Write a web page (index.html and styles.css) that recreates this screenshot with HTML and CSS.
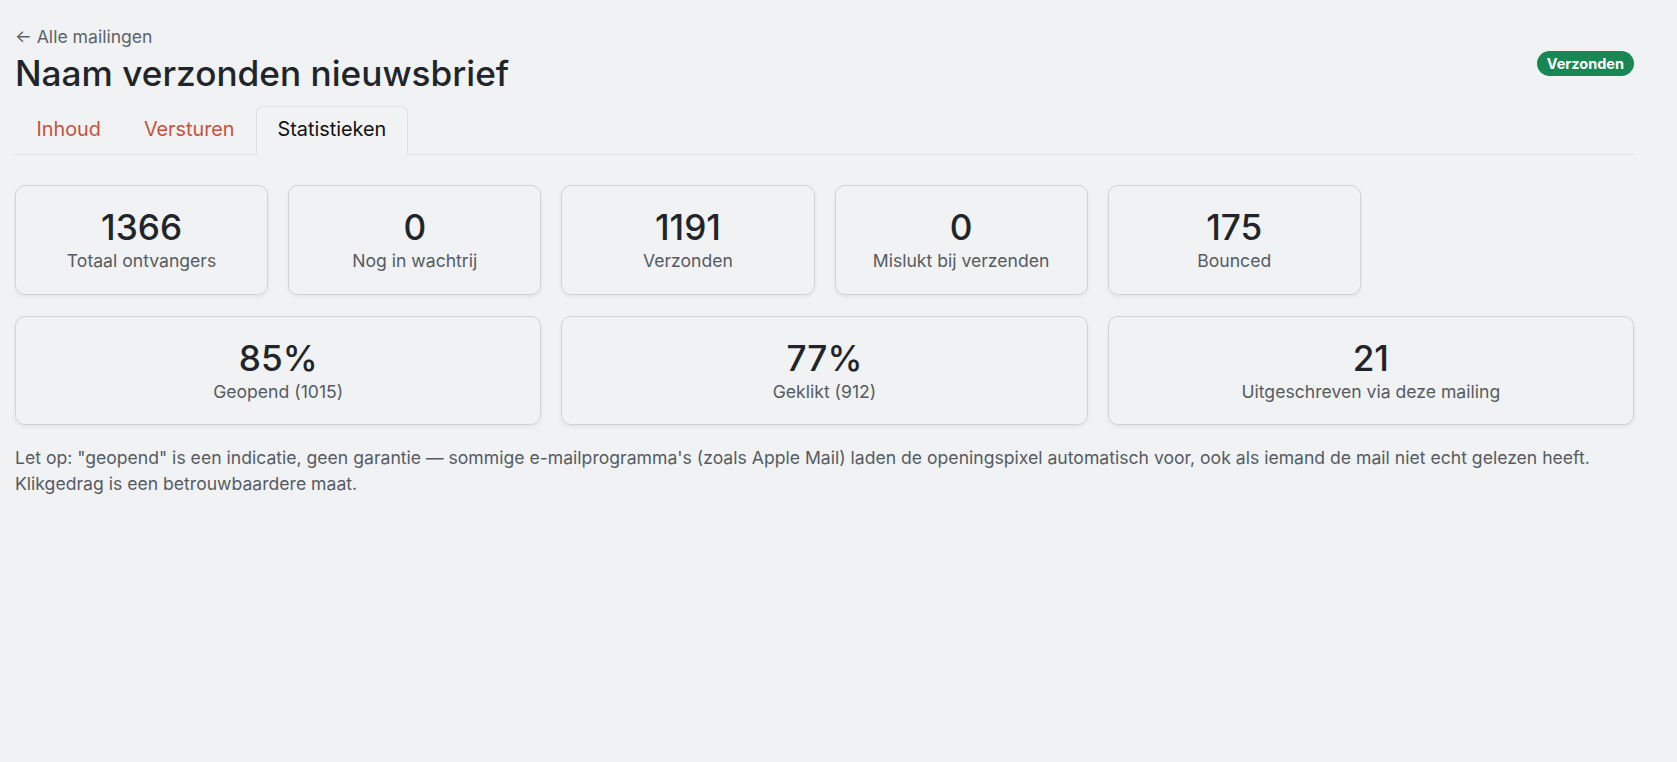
FILE: index.html
```html
<!DOCTYPE html>
<html lang="nl">
<head>
<meta charset="utf-8">
<title>Naam verzonden nieuwsbrief</title>
<link rel="stylesheet" href="styles.css">
</head>
<body>
<main class="page">
  <a class="back-link" href="#">&larr; Alle mailingen</a>
  <header class="page-head">
    <h1 class="page-title">Naam verzonden nieuwsbrief</h1>
    <span class="badge badge-success">Verzonden</span>
  </header>

  <nav class="tabs">
    <a class="tab" href="#">Inhoud</a>
    <a class="tab" href="#">Versturen</a>
    <a class="tab active" href="#">Statistieken</a>
  </nav>

  <section class="stats">
    <div class="stat"><div class="stat-value">1366</div><div class="stat-label">Totaal ontvangers</div></div>
    <div class="stat"><div class="stat-value">0</div><div class="stat-label">Nog in wachtrij</div></div>
    <div class="stat"><div class="stat-value">1191</div><div class="stat-label">Verzonden</div></div>
    <div class="stat"><div class="stat-value">0</div><div class="stat-label">Mislukt bij verzenden</div></div>
    <div class="stat"><div class="stat-value">175</div><div class="stat-label">Bounced</div></div>
    <div class="stat stat-wide"><div class="stat-value">85%</div><div class="stat-label">Geopend (1015)</div></div>
    <div class="stat stat-wide"><div class="stat-value">77%</div><div class="stat-label">Geklikt (912)</div></div>
    <div class="stat stat-wide"><div class="stat-value">21</div><div class="stat-label">Uitgeschreven via deze mailing</div></div>
  </section>

  <p class="note">Let op: "geopend" is een indicatie, geen garantie — sommige e-mailprogramma's (zoals Apple Mail) laden de openingspixel automatisch voor, ook als iemand de mail niet echt gelezen heeft. Klikgedrag is een betrouwbaardere maat.</p>
</main>
</body>
</html>
```

FILE: styles.css
```css
* {
  box-sizing: border-box;
}

html {
  font-size: 17.6px;
}

html, body {
  margin: 0;
  background: #f1f2f4;
}

body {
  font-family: Inter, "Noto Sans", sans-serif;
  font-size: 1rem;
  line-height: 1.5;
  color: #212529;
}

.page {
  padding: 24px 43px 24px 15px;
}

.back-link {
  display: inline-block;
  color: #5c636a;
  text-decoration: none;
  font-size: 1rem;
}

.page-head {
  display: flex;
  align-items: flex-start;
  justify-content: space-between;
  margin-top: 2px;
}

.page-title {
  margin: 0;
  font-size: 2rem;
  font-weight: 500;
  line-height: 1.2;
}

.badge {
  display: inline-block;
  margin-top: -1px;
  padding: 5px 10px;
  border-radius: 999px;
  font-size: 14.5px;
  font-weight: 700;
  line-height: 15px;
  color: #fff;
}

.badge-success {
  background: #198754;
}

.tabs {
  display: flex;
  margin-top: 11px;
  border-bottom: 1px solid #dee2e6;
}

.tab {
  display: block;
  margin-bottom: -1px;
  padding: 8.8px 20.5px;
  font-size: 1.125rem;
  line-height: 1.5;
  color: #c2543c;
  text-decoration: none;
  border: 1px solid transparent;
  border-top-left-radius: 8px;
  border-top-right-radius: 8px;
}

.tab.active {
  color: #111;
  background: #f1f2f4;
  border-color: #dee2e6 #dee2e6 #f1f2f4;
}

.stats {
  display: grid;
  grid-template-columns: repeat(6, 1fr);
  gap: 21px 20px;
  margin-top: 30px;
}

.stat {
  padding: 20px 16px 19px;
  text-align: center;
  border: 1px solid #cfd2d6;
  border-radius: 10px;
  box-shadow: 0 2px 4px rgba(0, 0, 0, 0.06);
}

.stat-wide {
  grid-column: span 2;
}

.stat-value {
  font-size: 2rem;
  font-weight: 500;
  line-height: 1.2;
  color: #212529;
}

.stat-label {
  font-size: 1rem;
  line-height: 1.5;
  color: #555b61;
}

.note {
  margin: 20px 0 0;
  font-size: 1rem;
  line-height: 26px;
  color: #555b61;
}
```
